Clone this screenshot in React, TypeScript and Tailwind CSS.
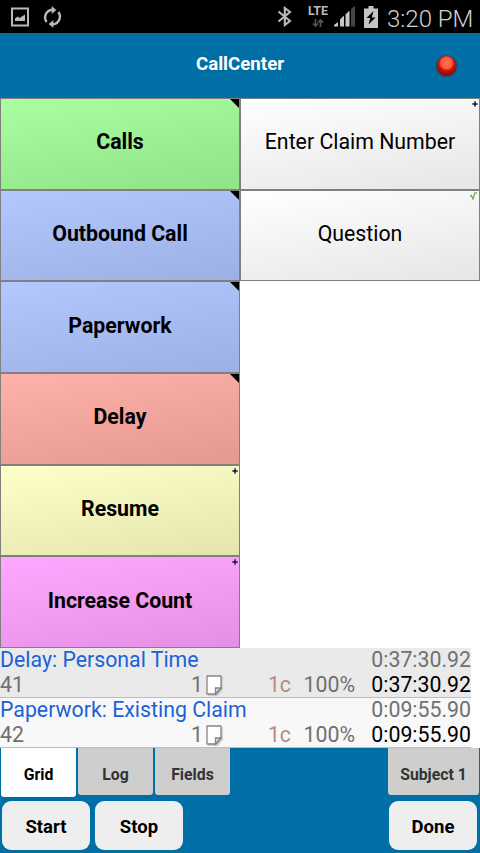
import clsx from 'clsx';

type Marker = 'corner' | 'plus' | 'check';

type CellProps = {
    label: string;
    color: string;
    marker: Marker;
    bold?: boolean;
};

type LogEntry = {
    id: number;
    title: string;
    time: string;
    row: string;
};

const events: CellProps[] = [
    { label: 'Calls', color: 'from-[#a9ffa1] to-[#90e388]', marker: 'corner', bold: true },
    { label: 'Outbound Call', color: 'from-[#b4c8ff] to-[#9bb0e4]', marker: 'corner', bold: true },
    { label: 'Paperwork', color: 'from-[#b4c8ff] to-[#9bb0e4]', marker: 'corner', bold: true },
    { label: 'Delay', color: 'from-[#ffb2a9] to-[#e4988f]', marker: 'corner', bold: true },
    { label: 'Resume', color: 'from-[#ffffca] to-[#e4e4af]', marker: 'plus', bold: true },
    { label: 'Increase Count', color: 'from-[#ffa8ff] to-[#e48fe4]', marker: 'plus', bold: true },
];

const questions: CellProps[] = [
    { label: 'Enter Claim Number', color: 'from-white to-[#e6e6e6]', marker: 'plus' },
    { label: 'Question', color: 'from-white to-[#e6e6e6]', marker: 'check' },
];

const log: LogEntry[] = [
    { id: 41, title: 'Delay: Personal Time', time: '0:37:30.92', row: 'bg-[#eaeaea]' },
    { id: 42, title: 'Paperwork: Existing Claim', time: '0:09:55.90', row: 'bg-[#f8f8f8]' },
];

function StatusBar() {
    return (
        <div className="flex h-[33px] shrink-0 items-center bg-black text-[#b9b9b9]">
            <svg className="ml-[11px] h-5 w-[18px]" viewBox="0 0 18 20">
                <path fill="none" stroke="currentColor" strokeWidth="2" d="M1 1.500h16v17H1z" />
                <path fill="currentColor" d="M4 14v-2.500l2.500-2 2 1.500L14 7.500V14z" />
            </svg>
            <svg className="ml-[14px] h-[22px] w-[19px]" viewBox="0 0 19 22">
                <path fill="none" stroke="currentColor" strokeWidth="2.400" d="M3.600 16A7.800 7.800 0 0 1 9 3.700h1M15.400 6A7.800 7.800 0 0 1 10 18.300H9" />
                <path fill="currentColor" d="M8.700 0l4.600 3.900-4.600 4zM10.300 22l-4.600-3.900 4.600-4z" />
            </svg>
            <svg className="ml-auto h-[21px] w-4" viewBox="0 0 16 21">
                <path fill="none" stroke="currentColor" strokeWidth="2.100" d="M1.500 5.500L13 15l-5.200 4V2L13 6 1.500 15.500" />
            </svg>
            <div className="ml-[13px] flex h-[33px] w-6 flex-col items-center">
                <span className="mt-[4px] text-[12.500px] leading-[13px] font-bold">LTE</span>
                <svg className="mt-[2px] h-2 w-3" viewBox="0 0 12 8">
                    <path fill="none" stroke="#555" strokeWidth="1.700" d="M3.500 0v7M1 4.500L3.500 7 6 4.500M8.500 8V1M6 3.500L8.500 1 11 3.500" />
                </svg>
            </div>
            <svg className="ml-[4px] h-[21px] w-[22px]" viewBox="0 0 22 21">
                <path fill="#c8c8c8" d="M0 20.500v-1.500l4-3v4.500zM6 20.500v-7l4-4v11zM11.500 20.500V8.500l4-4v16z" />
                <path fill="#444" d="M17 20.500V3l4-3.500v21z" />
            </svg>
            <svg className="ml-[8px] h-[22px] w-3.5" viewBox="0 0 14 22">
                <path fill="#c4c4c4" d="M4.500 0h5v2.500H14V22H0V2.500h4.500z" />
                <path fill="#000" d="M9.500 5L2.500 12h3.700L4.500 18.500l7-7H7.800z" />
            </svg>
            <span className="mt-[4px] mr-2 ml-[9px] w-[85px] text-[24px] leading-7 font-light whitespace-nowrap text-[#d2d2d2]">3:20 PM</span>
        </div>
    );
}

function CellMarker({ marker }: { marker: Marker }) {
    if (marker === 'corner') {
        return (
            <svg className="absolute top-0 right-0 h-[9px] w-[9px]" viewBox="0 0 9 9">
                <path d="M0 0h9v9z" />
            </svg>
        );
    }
    if (marker === 'check') {
        return (
            <svg className="absolute top-[1px] right-[2px] h-[8px] w-[7px]" viewBox="0 0 7 8">
                <path fill="none" stroke="#6fae55" strokeWidth="1.300" d="M0 4l1.300-.7L3 7 5 .8h2" />
            </svg>
        );
    }
    return (
        <svg className="absolute top-[2px] right-[1px] h-[6px] w-[6px]" viewBox="0 0 6 6">
            <path fill="#1b1650" d="M3 0l.8 2.200L6 3l-2.200.8L3 6l-.8-2.200L0 3l2.200-.8z" />
            <path fill="none" stroke="#1b1650" strokeWidth=".9" d="M3 0v6M0 3h6" />
        </svg>
    );
}

function Cell({ label, color, marker, bold }: CellProps) {
    return (
        <button
            type="button"
            className={clsx(
                'relative flex min-h-0 items-center justify-center border border-[#808080] bg-linear-170 pb-[3px] text-[21.300px]',
                color,
                bold && 'font-bold',
            )}
        >
            {label}
            <CellMarker marker={marker} />
        </button>
    );
}

function NoteIcon() {
    return (
        <svg className="mt-[1px] h-[21px] w-[17px]" viewBox="0 0 17 21">
            <path fill="#bbb" opacity=".6" d="M2 2h15v13l-5 6H2z" />
            <path fill="#fff" stroke="#858585" strokeWidth="1.300" strokeLinejoin="round" d="M1 1h14v12.500L10 19H1z" />
            <path fill="#ddd" stroke="#858585" strokeWidth="1.300" d="M15 13h-5.500v6z" />
        </svg>
    );
}

function LogRow({ entry }: { entry: LogEntry }) {
    return (
        <div className={clsx('mr-[9px] h-[50px] border-b border-[#bdbdbd] text-[21.300px] leading-[23px] text-[#707070]', entry.row)}>
            <div className="flex h-[24px] justify-between">
                <span className="text-[#1a62d6]">{entry.title}</span>
                <span>{entry.time}</span>
            </div>
            <div className="flex h-[25px] items-center">
                <span className="w-[191px]">{entry.id}</span>
                <span className="w-[15px]">1</span>
                <NoteIcon />
                <span className="ml-auto text-[#bd8884]">1c</span>
                <span className="w-[64px] text-right">100%</span>
                <span className="w-[116px] text-right text-black">{entry.time}</span>
            </div>
        </div>
    );
}

function Tab({ label, className }: { label: string; className: string }) {
    return (
        <button type="button" className={clsx('rounded-b-[3px] text-[15.800px] font-bold', className)}>
            {label}
        </button>
    );
}

function ActionButton({ label }: { label: string }) {
    return (
        <button type="button" className="h-[49px] w-[88px] rounded-[9px] bg-[#eeeeee] pt-[4px] text-[18.500px] font-bold">
            {label}
        </button>
    );
}

export default function App() {
    return (
        <div className="flex h-[853px] w-[480px] flex-col overflow-hidden bg-white font-['Roboto',sans-serif] text-black">
            <StatusBar />

            <header className="grid h-[65px] shrink-0 grid-cols-3 items-center bg-[#006fa6] text-white">
                <h1 className="col-start-2 pb-0.5 text-center text-[18.700px] font-bold">CallCenter</h1>
                <svg className="mr-[22px] h-[23px] w-[23px] justify-self-end" viewBox="0 0 23 23">
                    <defs>
                        <radialGradient id="led" cx="50%" cy="35%" r="62%">
                            <stop offset="0" stopColor="#ff7050" />
                            <stop offset=".45" stopColor="#ff5a3e" />
                            <stop offset=".62" stopColor="#c91408" />
                            <stop offset="1" stopColor="#8c0905" />
                        </radialGradient>
                    </defs>
                    <circle cx="11.500" cy="12" r="10.800" fill="#264c66" />
                    <circle cx="11.500" cy="12" r="9.900" fill="url(#led)" />
                </svg>
            </header>

            <main className="grid h-[550px] shrink-0 grid-cols-2">
                <div className="grid grid-rows-6">
                    {events.map((cell) => (
                        <Cell key={cell.label} {...cell} />
                    ))}
                </div>
                <div className="grid grid-rows-6">
                    {questions.map((cell) => (
                        <Cell key={cell.label} {...cell} />
                    ))}
                </div>
            </main>

            <section className="h-[100px] shrink-0">
                {log.map((entry) => (
                    <LogRow key={entry.id} entry={entry} />
                ))}
            </section>

            <footer className="h-[105px] shrink-0 bg-[#006fa6]">
                <div className="flex h-[53px] items-start gap-[2px] px-[1px]">
                    <Tab label="Grid" className="h-[49px] w-[75px] bg-white pt-[4px]" />
                    <Tab label="Log" className="h-[47px] w-[75px] bg-[#cecece] pt-[6px] text-[#333333]" />
                    <Tab label="Fields" className="h-[47px] w-[75px] bg-[#cecece] pt-[6px] text-[#333333]" />
                    <Tab label="Subject 1" className="ml-auto h-[47px] w-[91px] bg-[#cecece] pt-[6px] text-[#333333]" />
                </div>
                <div className="flex gap-[5px] pr-[3px] pl-[2px]">
                    <ActionButton label="Start" />
                    <ActionButton label="Stop" />
                    <div className="ml-auto">
                        <ActionButton label="Done" />
                    </div>
                </div>
            </footer>
        </div>
    );
}
